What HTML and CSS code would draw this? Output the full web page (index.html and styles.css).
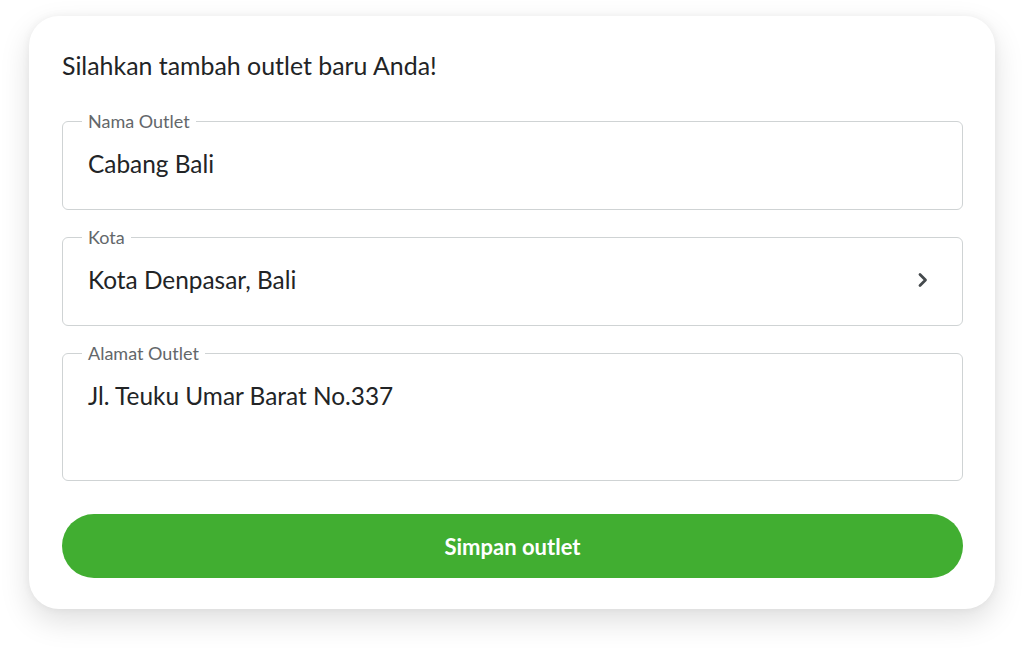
FILE: index.html
```html
<!DOCTYPE html>
<html lang="id">
<head>
<meta charset="utf-8">
<title>Tambah Outlet</title>
<link rel="stylesheet" href="styles.css">
</head>
<body>
<div class="page">
  <form class="card">
    <h1 class="title">Silahkan tambah outlet baru Anda!</h1>
    <fieldset class="field">
      <legend class="label">Nama Outlet</legend>
      <div class="value">Cabang Bali</div>
    </fieldset>
    <fieldset class="field">
      <legend class="label">Kota</legend>
      <div class="value row">
        <span>Kota Denpasar, Bali</span>
        <svg class="chev" width="12" height="16" viewBox="0 0 12 16"><path d="M3 2.5 L8.5 8 L3 13.5" fill="none" stroke="#454a4d" stroke-width="2.8" stroke-linecap="round" stroke-linejoin="round"/></svg>
      </div>
    </fieldset>
    <fieldset class="field tall">
      <legend class="label">Alamat Outlet</legend>
      <div class="value">Jl. Teuku Umar Barat No.337</div>
    </fieldset>
    <button type="button" class="btn">Simpan outlet</button>
  </form>
</div>
</body>
</html>
```
FILE: styles.css
```css
html, body {
  margin: 0;
  padding: 0;
  background: #ffffff;
}
body {
  font-family: Lato, "Noto Sans", "Liberation Sans", sans-serif;
  color: #222426;
}
.page {
  box-sizing: border-box;
  min-height: 651px;
  padding: 16px 29px 42px 29px;
}
.card {
  box-sizing: border-box;
  width: 966px;
  height: 593px;
  background: #fff;
  border-radius: 30px;
  box-shadow: 0 12px 30px rgba(0, 0, 0, 0.13), 0 0 8px rgba(0, 0, 0, 0.05);
  padding: 34px 32px 30px 33px;
  display: flex;
  flex-direction: column;
}
.title {
  margin: 0 0 31px 0;
  font-size: 24.9px;
  line-height: 30px;
  font-weight: 400;
  color: #222426;
}
.field {
  margin: 0 0 17px 0;
  padding: 0 33px 31px 25px;
  border: 1.5px solid #cfd3d4;
  border-radius: 6px;
  min-width: 0;
}
.field.tall {
  padding-bottom: 70px;
  margin-bottom: 33px;
}
.label {
  padding: 0 6px;
  margin-left: -6px;
  font-size: 18px;
  line-height: 20px;
  color: #63676a;
}
.value {
  padding-top: 19px;
  font-size: 24.4px;
  line-height: 28px;
  color: #222426;
}
.row {
  display: flex;
  align-items: center;
  justify-content: space-between;
}
.chev {
  display: block;
}
.btn {
  height: 64px;
  border: none;
  border-radius: 32px;
  background: #41ae31;
  color: #fff;
  font-family: Lato, "Noto Sans", sans-serif;
  font-size: 22px;
  font-weight: 700;
  cursor: pointer;
}
```
